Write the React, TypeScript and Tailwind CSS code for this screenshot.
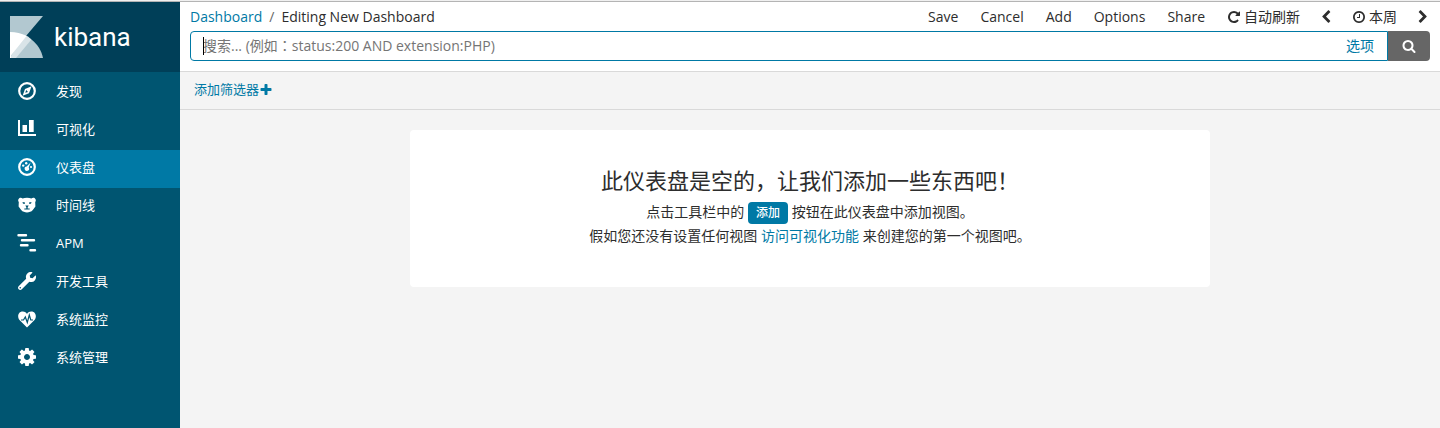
import React from "react";
import { FaWrench } from "react-icons/fa";

const glyphs = {
  left: "M1427 301l-531 531 531 531q19 19 19 45t-19 45l-166 166q-19 19-45 19t-45-19l-742-742q-19-19-19-45t19-45l742-742q19-19 45-19t45 19l166 166q19 19 19 45t-19 45z",
  right: "M1363 877l-742 742q-19 19-45 19t-45-19l-166-166q-19-19-19-45t19-45l531-531-531-531q-19-19-19-45t19-45l166-166q19-19 45-19t45 19l742 742q19 19 19 45t-19 45z",
  clock: "M1024 544v448q0 14-9 23t-23 9h-320q-14 0-23-9t-9-23v-64q0-14 9-23t23-9h224v-352q0-14 9-23t23-9h64q14 0 23 9t9 23zm416 352q0-148-73-273t-198-198-273-73-273 73-198 198-73 273 73 273 198 198 273 73 273-73 198-198 73-273zm224 0q0 209-103 385.5t-279.5 279.5-385.5 103-385.5-103-279.5-279.5-103-385.5 103-385.5 279.5-279.5 385.5-103 385.5 103 279.5 279.5 103 385.5z",
  repeat: "M1664 256v448q0 26-19 45t-45 19h-448q-42 0-59-40-17-39 14-69l138-138q-148-137-349-137-104 0-198.5 40.5t-163.5 109.5-109.5 163.5-40.5 198.5 40.5 198.5 109.5 163.5 163.5 109.5 198.5 40.5q119 0 225-52t179-147q7-10 23-12 15 0 25 9l137 138q9 8 9.5 20.5t-7.5 22.5q-109 132-264 204.5t-327 72.5q-156 0-298-61t-245-164-164-245-61-298 61-298 164-245 245-164 298-61q147 0 284.5 55.5t244.5 156.5l130-129q29-31 70-14 39 17 39 59z",
  search: "M1216 832q0-185-131.5-316.5t-316.5-131.5-316.5 131.5-131.5 316.5 131.5 316.5 316.5 131.5 316.5-131.5 131.5-316.5zm512 832q0 52-38 90t-90 38q-54 0-90-38l-343-342q-179 124-399 124-143 0-273.5-55.5t-225-150-150-225-55.5-273.5 55.5-273.5 150-225 225-150 273.5-55.5 273.5 55.5 225 150 150 225 55.5 273.5q0 220-124 399l343 343q37 37 37 90z",
  plus: "M1600 736v192q0 40-28 68t-68 28h-416v416q0 40-28 68t-68 28h-192q-40 0-68-28t-28-68v-416h-416q-40 0-68-28t-28-68v-192q0-40 28-68t68-28h416v-416q0-40 28-68t68-28h192q40 0 68 28t28 68v416h416q40 0 68 28t28 68z",
};

const Glyph = ({ name }: { name: keyof typeof glyphs }) => (
  <svg viewBox="0 0 1792 1792" className="size-3.5 shrink-0" fill="currentColor" aria-hidden="true">
    <path d={glyphs[name]} />
  </svg>
);

const Discover = () => (
  <svg viewBox="0 0 18 18" className="size-[18px]" aria-hidden="true">
    <circle cx="9" cy="9" r="7.8" fill="none" stroke="currentColor" strokeWidth="2.2" />
    <path fillRule="evenodd" fill="currentColor" d="M13.6 4.2 11 11.2 4.6 13.8 7 6.9ZM8.2 8 7.3 10.8 10 9.9Z" />
  </svg>
);

const Visualize = () => (
  <svg viewBox="0 0 18 18" className="size-[18px]" fill="currentColor" aria-hidden="true">
    <path d="M0 0h2v14h16v2H0Z" />
    <path d="M4.500 5H9v7H4.500ZM11 0h4.700v12H11Z" />
  </svg>
);

const Dashboard = () => (
  <svg viewBox="0 0 18 18" className="size-[18px]" fill="currentColor" aria-hidden="true">
    <circle cx="9" cy="9" r="7.8" fill="none" stroke="currentColor" strokeWidth="2.2" />
    <circle cx="5.2" cy="7.6" r="1.200" />
    <circle cx="8.2" cy="5.2" r="1.200" />
    <circle cx="13" cy="9" r="1.100" />
    <path d="m12.600 4.600-1.900 5a2.200 2.200 0 1 1-2-1Z" />
  </svg>
);

const Timelion = () => (
  <svg viewBox="0 0 18 18" className="size-[18px]" aria-hidden="true">
    <path fill="currentColor" d="M1.2 2.2C2.3 1.5 3.7 1.7 4.6 2.4 7 1.6 11 1.6 13.4 2.4c.9-.7 2.3-.9 3.4-.2 1.2.8 1.4 2.6.4 3.8l.2 4.6-2.6 3.400C13.400 15.800 11 16.400 9 16.400S4.600 15.800 3.200 14L.6 10.600.8 6C-.2 4.800 0 3 1.200 2.200Z" />
    <path fill="#005571" d="M4.500 6 7 6.500v1.200H5ZM13.500 6 11 6.500v1.200h2ZM7.300 9.500h3.400l-1 1.800v1.200h2v1.100H6.300v-1.100h2v-1.200Z" />
  </svg>
);

const Apm = () => (
  <svg viewBox="0 0 18 18" className="size-[18px] overflow-visible" stroke="currentColor" strokeWidth="2.4" strokeLinecap="round" aria-hidden="true">
    <path d="M0.500 1.200H8M4 6.200h12M3 11.200h6.500M12.500 16.200H17" />
  </svg>
);

const Heart = () => (
  <svg viewBox="0 0 18 18" className="size-[18px]" aria-hidden="true">
    <path fill="currentColor" d="M9 17.500 1.500 10C-1 7 0 1.500 4.700 1.500 7 1.500 8.300 2.800 9 4 9.700 2.800 11 1.500 13.300 1.500 18 1.500 19 7 16.500 10Z" />
    <path fill="none" stroke="#005571" strokeWidth="1.200" d="M3 10H5.500L7.300 7l2 5.500 2-7.500 1.500 5H15" />
  </svg>
);

const Gear = () => (
  <svg viewBox="128 128 1536 1536" className="size-[18px]" fill="currentColor" aria-hidden="true">
    <path d="M1152 896q0-106-75-181t-181-75-181 75-75 181 75 181 181 75 181-75 75-181zm512-109v222q0 12-8 23t-20 13l-185 28q-19 54-39 91 35 50 107 138 10 12 10 25t-9 23q-27 37-99 108t-94 71q-12 0-26-9l-138-108q-44 23-91 38-16 136-29 186-7 28-36 28h-222q-14 0-24.5-8.5t-11.5-21.5l-28-184q-49-16-90-37l-141 107q-10 9-25 9-14 0-25-11-126-114-165-168-7-10-7-23 0-12 8-23 15-21 51-66.500t54-70.500q-27-50-41-99l-183-27q-13-2-21-12.500t-8-23.500v-222q0-12 8-23t19-13l186-28q14-46 39-92-40-57-107-138-10-12-10-24 0-10 9-23 26-36 98.500-107.500t94.500-71.500q13 0 26 10l138 107q44-23 91-38 16-136 29-186 7-28 36-28h222q14 0 24.500 8.500t11.500 21.500l28 184q49 16 90 37l142-107q9-9 24-9 13 0 25 10 129 119 165 170 7 8 7 22 0 12-8 23-15 21-51 66.500t-54 70.500q26 50 41 98l183 28q13 2 21 12.500t8 23.500z" />
  </svg>
);

const items = [
  { label: "发现", icon: <Discover /> },
  { label: "可视化", icon: <Visualize /> },
  { label: "仪表盘", icon: <Dashboard />, active: true },
  { label: "时间线", icon: <Timelion /> },
  { label: "APM", icon: <Apm /> },
  { label: "开发工具", icon: <FaWrench className="size-[18px] -scale-x-100 rotate-90" /> },
  { label: "系统监控", icon: <Heart /> },
  { label: "系统管理", icon: <Gear /> },
];

const Logo = () => (
  <svg viewBox="0 0 33 42" className="h-[42px] w-[33px]" aria-hidden="true">
    <path fill="#b2c8d0" d="M0 0h33L16 20 0 30Z" />
    <path fill="#b2c8d0" d="M0 16C16 16 30 27 33 42H0Z" />
    <path fill="#d9e4e8" d="M14 18.500Q18 20 21.400 23.400L6 42H0Z" />
    <path fill="#fff" d="M0 16Q9 16 16.500 20L1 39.500V42H0Z" />
  </svg>
);

const menu = ["Save", "Cancel", "Add", "Options", "Share"];

export default function App() {
  return (
    <div className="flex min-h-screen flex-col border-t border-[#f0f0f0] bg-[#f4f4f4] font-['Open_Sans','Noto_Sans_CJK_SC',sans-serif] text-sm text-[#2d2d2d]">
      <div className="flex grow border-t border-[#b4b4b4]">
        <aside className="w-[180px] shrink-0 bg-[#005571] text-white">
          <a href="#home" className="flex h-[70px] items-center gap-[11px] bg-[#003f58] px-2.5">
            <Logo />
            <span className="pt-0.5 font-[Roboto,sans-serif] text-[26px]">kibana</span>
          </a>
          <nav className="pt-0.5">
            {items.map((item) => (
              <a
                key={item.label}
                href="#nav"
                aria-current={item.active ? "page" : undefined}
                className={`flex h-[38px] items-center gap-5 pb-1 pl-[18px] text-[13px] ${item.active ? "bg-[#0079a5]" : ""}`}
              >
                {item.icon}
                <span className="pt-px">{item.label}</span>
              </a>
            ))}
          </nav>
        </aside>
        <main className="min-w-0 grow">
          <header className="border-b border-[#d9d9d9] bg-white px-2.5 pb-2.5">
            <div className="flex h-[29px] items-center justify-between">
              <nav className="flex gap-[7px]" aria-label="Breadcrumb">
                <a href="#dashboard" className="text-[#0079a5]">Dashboard</a>
                <span className="text-[#666]">/</span>
                <span>Editing New Dashboard</span>
              </nav>
              <div className="flex items-center gap-[22px]">
                {menu.map((label) => (
                  <button key={label}>{label}</button>
                ))}
                <div className="flex items-center gap-[19px]">
                  <button className="flex items-center gap-[3px]"><Glyph name="repeat" />自动刷新</button>
                  <button aria-label="Previous"><Glyph name="left" /></button>
                  <button className="flex items-center gap-[3px]"><Glyph name="clock" />本周</button>
                  <button aria-label="Next"><Glyph name="right" /></button>
                </div>
              </div>
            </div>
            <form className="flex h-[30px]">
              <div className="relative flex grow items-center rounded-l border border-[#0079a5] pr-[13px]">
                <span className="absolute left-3 h-[18px] w-px bg-black" aria-hidden="true" />
                <input
                  aria-label="搜索"
                  placeholder="搜索... (例如：status:200 AND extension:PHP)"
                  className="min-w-0 grow px-3 font-['Open_Sans','Noto_Sans_CJK_TC',sans-serif] outline-none placeholder:text-[#757575]"
                />
                <a href="#options" className="text-[#0079a5]">选项</a>
              </div>
              <button type="button" aria-label="Search" className="flex w-[42px] items-center justify-center rounded-r bg-[#666] text-white"><Glyph name="search" /></button>
            </form>
          </header>
          <div className="flex h-[38px] items-center border-b border-[#d9d9d9] px-3.5 pb-0.5 text-[13px]">
            <button className="flex items-center text-[#0079a5]">添加筛选器<Glyph name="plus" /></button>
          </div>
          <section className="mx-auto mt-5 max-w-[800px] rounded bg-white px-5 pt-[37px] pb-10 text-center">
            <h1 className="text-[22px] leading-[26px]">此仪表盘是空的，让我们添加一些东西吧！</h1>
            <p className="mt-[7px] leading-[23px]">点击工具栏中的 <button className="rounded bg-[#0079a5] px-2 align-middle text-xs leading-[22px] font-medium text-white">添加</button> 按钮在此仪表盘中添加视图。</p>
            <p className="leading-[23px]">假如您还没有设置任何视图 <a href="#visualize" className="text-[#0079a5]">访问可视化功能</a> 来创建您的第一个视图吧。</p>
          </section>
        </main>
      </div>
    </div>
  );
}
